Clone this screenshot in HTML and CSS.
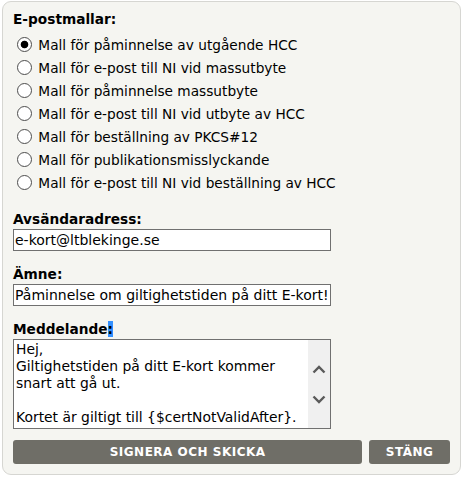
FILE: index.html
```html
<!DOCTYPE html>
<html lang="sv">

<head>
    <meta charset="UTF-8">
    <meta name="viewport" content="width=device-width, initial-scale=1.0">
    <title>E-postmallar</title>
    <link rel="stylesheet" href="styles.css">
</head>

<body>
    <div class="panel">
        <div class="field-label">E-postmallar:</div>
        <div class="templates">
            <label class="tpl"><input type="radio" name="tpl" checked> Mall för påminnelse av utgående HCC</label>
            <label class="tpl"><input type="radio" name="tpl"> Mall för e-post till NI vid massutbyte</label>
            <label class="tpl"><input type="radio" name="tpl"> Mall för påminnelse massutbyte</label>
            <label class="tpl"><input type="radio" name="tpl"> Mall för e-post till NI vid utbyte av HCC</label>
            <label class="tpl"><input type="radio" name="tpl"> Mall för beställning av PKCS#12</label>
            <label class="tpl"><input type="radio" name="tpl"> Mall för publikationsmisslyckande</label>
            <label class="tpl"><input type="radio" name="tpl"> Mall för e-post till NI vid beställning av HCC</label>
        </div>

        <div class="field field-first">
            <div class="field-label">Avsändaradress:</div>
            <input class="text-input" type="text" value="e-kort@ltblekinge.se">
        </div>

        <div class="field">
            <div class="field-label">Ämne:</div>
            <input class="text-input" type="text" value="Påminnelse om giltighetstiden på ditt E-kort!">
        </div>

        <div class="field">
            <div class="field-label">Meddelande<span class="sel">:</span></div>
            <div class="msg-box">
                <textarea class="msg-text">Hej,
Giltighetstiden på ditt E-kort kommer snart att gå ut.

Kortet är giltigt till {$certNotValidAfter}.

Med vänliga hälsningar
E-kortsadministrationen</textarea>
                <div class="scroll">
                    <svg width="14" height="9" viewBox="0 0 14 9"><path d="M1.5 7.5 L7 2 L12.5 7.5" fill="none" stroke="#5a5a5a" stroke-width="2.4"/></svg>
                    <svg width="14" height="9" viewBox="0 0 14 9"><path d="M1.5 1.5 L7 7 L12.5 1.5" fill="none" stroke="#5a5a5a" stroke-width="2.4"/></svg>
                </div>
            </div>
        </div>

        <div class="actions">
            <a href="#" class="btn btn-wide">Signera och skicka</a>
            <a href="#" class="btn">Stäng</a>
        </div>
    </div>
</body>

</html>
```

FILE: styles.css
```css
body {
    margin: 0;
    font-family: "DejaVu Sans", Verdana, sans-serif;
    font-size: 13.7px;
    color: #000;
    background: #fff;
}

.panel {
    margin: 1px 3px 0 2px;
    padding: 9px 10px 10px 10px;
    background: #f5f5f1;
    border: 1px solid #d6d6d2;
    border-radius: 9px;
    height: 474px;
    box-sizing: border-box;
}

.field-label {
    font-weight: bold;
    line-height: 17px;
}

.sel {
    background: #3390ff;
    color: #000;
}

.templates {
    display: flex;
    flex-direction: column;
    margin-top: 5px;
}

.tpl {
    height: 23px;
    display: flex;
    align-items: center;
    white-space: pre;
}

/* radio i gammal stil */
.tpl input {
    appearance: none;
    -webkit-appearance: none;
    width: 15px;
    height: 15px;
    margin: 0 2px 0 4px;
    border: 1px solid #4d4d4d;
    border-radius: 50%;
    background: #fff;
    box-sizing: border-box;
}

.tpl input:checked {
    background: radial-gradient(circle, #000 0, #000 3.4px, #fff 4.2px);
}

.field {
    margin-top: 15px;
}

.field-first {
    margin-top: 17px;
}

.text-input {
    display: block;
    width: 318px;
    height: 22px;
    box-sizing: border-box;
    margin: 1px 0 0;
    padding: 1px 1px;
    border: 1px solid #707070;
    border-radius: 0;
    background: #fff;
    font-family: inherit;
    font-size: 14px;
    color: #000;
}

.msg-box {
    display: flex;
    width: 318px;
    height: 90px;
    box-sizing: border-box;
    margin-top: 1px;
    border: 1px solid #707070;
    background: #fff;
}

.msg-text {
    flex: 1;
    border: 0;
    margin: 0;
    padding: 1px 2px;
    resize: none;
    overflow: hidden;
    font-family: inherit;
    font-size: 13.9px;
    line-height: 17px;
    color: #000;
    background: #fff;
}

.scroll {
    width: 22px;
    background: #f0f0f0;
    display: flex;
    flex-direction: column;
    align-items: center;
    justify-content: center;
    gap: 21px;
}

.actions {
    display: flex;
    gap: 7px;
    margin-top: 11px;
}

.btn {
    display: block;
    width: 81px;
    height: 24px;
    line-height: 24px;
    text-align: center;
    background: #6f6e67;
    color: #fff;
    font-size: 12px;
    font-weight: bold;
    letter-spacing: 0.5px;
    text-transform: uppercase;
    text-decoration: none;
    border-radius: 3px;
}

.btn-wide {
    width: 350px;
}
```
